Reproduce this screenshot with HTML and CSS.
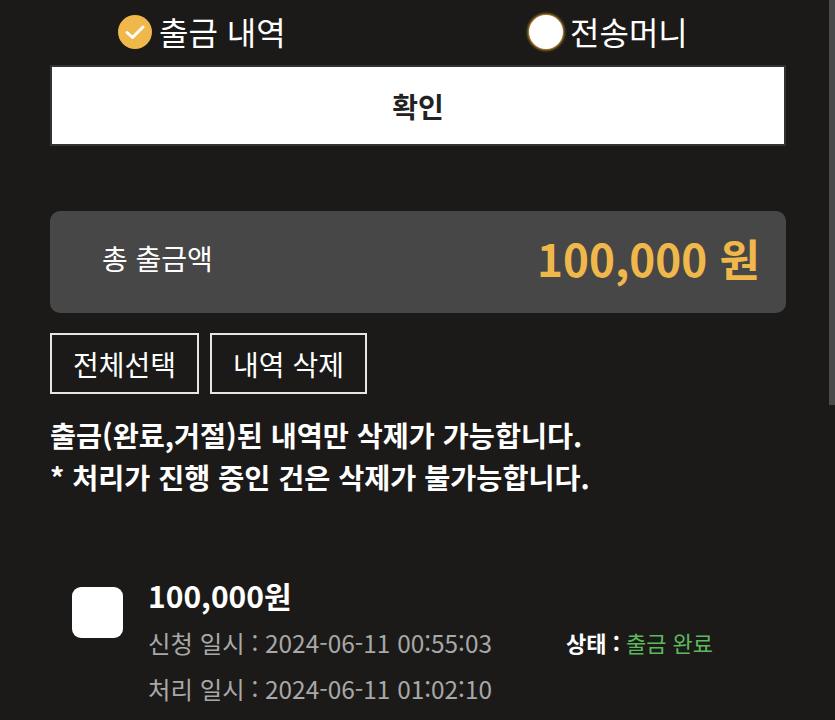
FILE: index.html
```html
<!DOCTYPE html>
<html lang="ko">
<head>
    <meta charset="UTF-8">
    <meta name="viewport" content="width=device-width, initial-scale=1.0">
    <title>출금 내역</title>
    <link rel="stylesheet" href="styles.css">
</head>
<body>
    <div class="page">
        <div class="tabs">
            <label class="tab">
                <span class="radio checked">
                    <svg viewBox="0 0 34 34" width="34" height="34"><path d="M9 17.5l5.5 5L25 12" fill="none" stroke="#fff" stroke-width="3" stroke-linecap="round" stroke-linejoin="round"/></svg>
                </span>
                <span class="tab-text">출금 내역</span>
            </label>
            <label class="tab">
                <span class="radio"></span>
                <span class="tab-text">전송머니</span>
            </label>
        </div>

        <button class="confirm">확인</button>

        <div class="total">
            <span class="total-label">총 출금액</span>
            <span class="total-amount">100,000 원</span>
        </div>

        <div class="actions">
            <button class="outline">전체선택</button>
            <button class="outline">내역 삭제</button>
        </div>

        <p class="notice">출금(완료,거절)된 내역만 삭제가 가능합니다.<br>* 처리가 진행 중인 건은 삭제가 불가능합니다.</p>

        <div class="item">
            <span class="check"></span>
            <div class="item-body">
                <div class="item-amount">100,000원</div>
                <div class="item-row">
                    <span class="item-date">신청 일시 : 2024-06-11 00:55:03</span>
                    <span class="item-status"><b>상태 :</b> <span class="done">출금 완료</span></span>
                </div>
                <div class="item-row">
                    <span class="item-date">처리 일시 : 2024-06-11 01:02:10</span>
                </div>
            </div>
        </div>
    </div>
    <div class="scroll-thumb"></div>
</body>
</html>
```

FILE: styles.css
```css
body {
    margin: 0;
    padding: 0;
    background-color: #1b1a18;
    color: #fff;
    font-family: "Noto Sans CJK KR", "Noto Sans", sans-serif;
    overflow: hidden;
}

.page {
    width: 736px;
    margin-left: 50px;
}

.tabs {
    display: flex;
    height: 64px;
    align-items: center;
}

.tab {
    display: flex;
    align-items: center;
    gap: 7px;
    width: 411px;
    padding-left: 68px;
    box-sizing: border-box;
}

.tab:last-child {
    width: auto;
}

.radio {
    width: 34px;
    height: 34px;
    border-radius: 50%;
    background-color: #fff;
    box-shadow: 0 0 3px 1px #e8a93c;
    display: flex;
    align-items: center;
    justify-content: center;
}

.radio.checked {
    background-color: #f0b84a;
    box-shadow: none;
}

.tab-text {
    font-size: 32px;
    line-height: 1;
    margin-top: -3px;
}

.confirm {
    display: block;
    width: 100%;
    height: 81px;
    margin-top: 1px;
    background-color: #fff;
    border: 2px solid #333;
    font-family: inherit;
    font-size: 28px;
    font-weight: bold;
    color: #222;
}

.total {
    margin-top: 65px;
    height: 102px;
    background-color: #474747;
    border-radius: 10px;
    display: flex;
    align-items: center;
    justify-content: space-between;
    padding: 0 26px 0 52px;
}

.total-label {
    font-size: 28px;
    margin-top: -8px;
}

.total-amount {
    font-size: 44px;
    font-weight: bold;
    color: #f0b84a;
    margin-top: -8px;
}

.actions {
    display: flex;
    gap: 11px;
    margin-top: 20px;
}

.outline {
    height: 61px;
    padding: 0 21px;
    background: transparent;
    border: 2px solid #e6e6e6;
    color: #fff;
    font-family: inherit;
    font-size: 28px;
}

.notice {
    margin: 20px 0 0;
    font-size: 28.3px;
    font-weight: bold;
    line-height: 42px;
}

.item {
    display: flex;
    gap: 25px;
    margin-top: 77px;
    padding-left: 22px;
}

.check {
    width: 51px;
    height: 51px;
    border-radius: 9px;
    background-color: #fff;
    margin-top: 12px;
    flex-shrink: 0;
}

.item-amount {
    font-size: 30px;
    font-weight: bold;
    line-height: 40px;
    margin-bottom: 4px;
}

.item-row {
    display: flex;
    align-items: center;
    height: 46px;
}

.item-date {
    width: 418px;
    font-size: 24.4px;
    color: #a8a8a8;
}

.item-status {
    font-size: 22px;
}

.item-status .done {
    color: #5cb85c;
}

.scroll-thumb {
    position: fixed;
    top: 0;
    right: 0;
    width: 6px;
    height: 405px;
    background-color: #4a4a4a;
}
```
